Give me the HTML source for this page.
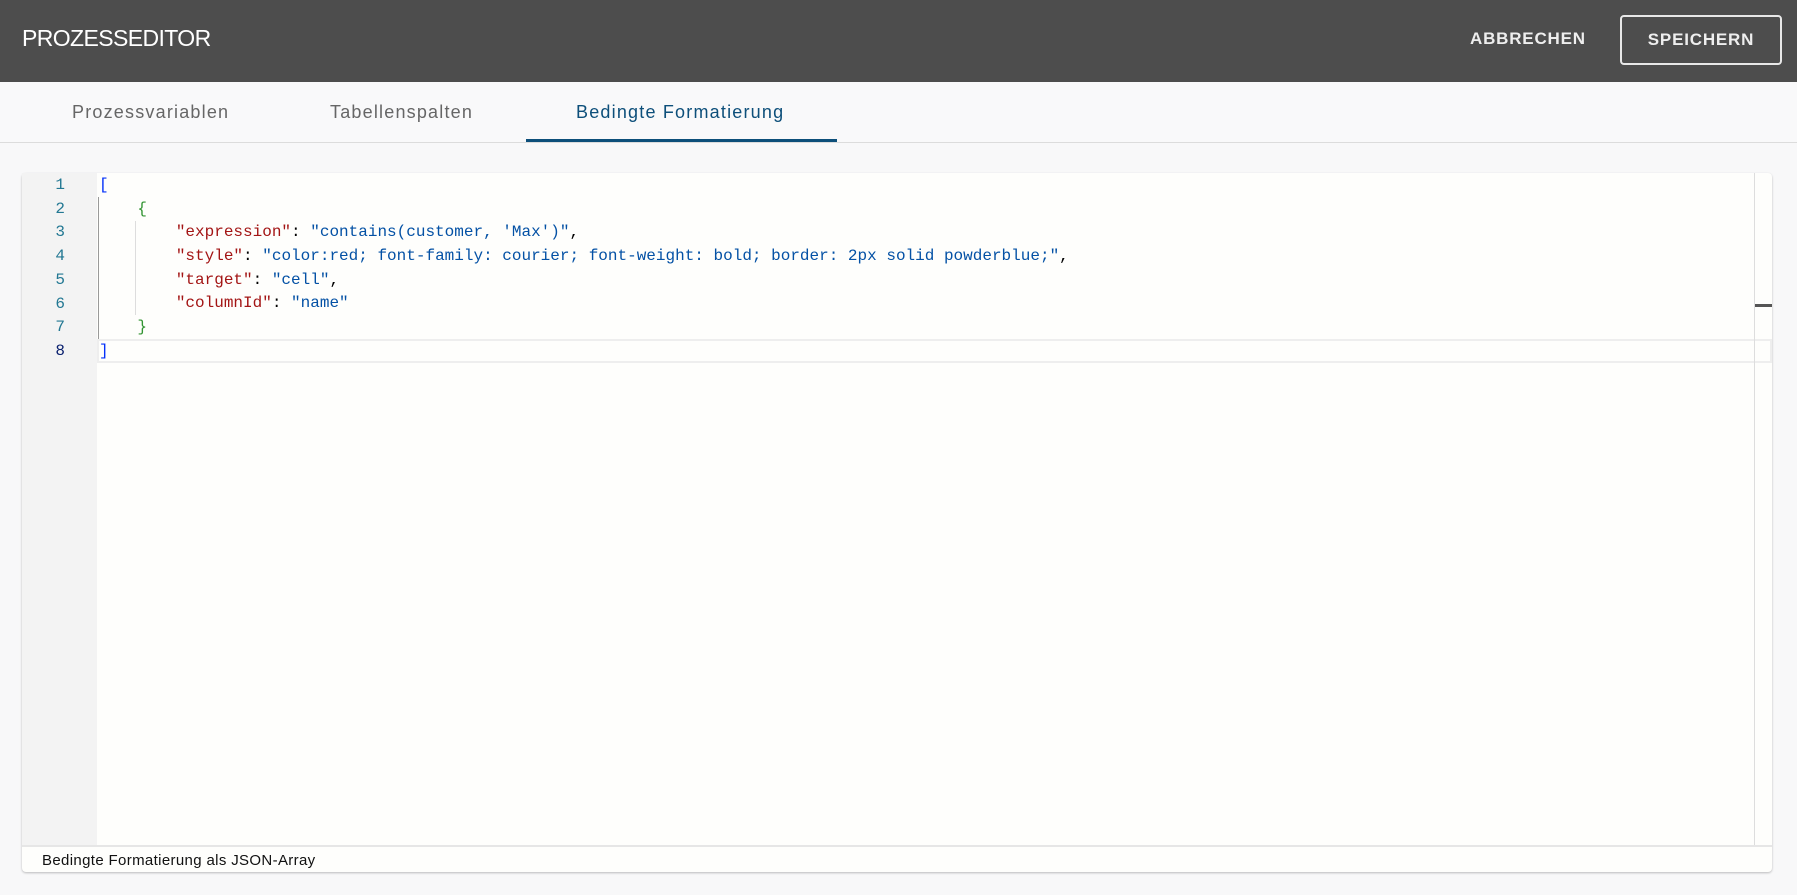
<!DOCTYPE html>
<html><head><meta charset="utf-8"><style>
*{margin:0;padding:0;box-sizing:border-box}
body{width:1797px;height:895px;background:#f8f8f9;font-family:"Liberation Sans",sans-serif;position:relative;overflow:hidden}
.hdr{position:absolute;left:0;top:0;width:1797px;height:82px;background:#4d4d4d}
.title{position:absolute;left:22px;top:25px;color:#fff;font-size:23px;letter-spacing:-0.6px}
.abb{position:absolute;left:1470px;top:29px;color:#eee;font-weight:bold;font-size:17px;letter-spacing:0.8px}
.sp{position:absolute;left:1620px;top:15px;width:162px;height:50px;border:2px solid #e8e8e8;border-radius:4px;color:#eee;font-weight:bold;font-size:17px;letter-spacing:0.8px;text-align:center;line-height:46px}
.tabs{position:absolute;left:0;top:82px;width:1797px;height:61px;background:#f9f9fa;border-bottom:1px solid #dcdcdc}
.tab{position:absolute;top:20px;font-size:18px;color:#666;letter-spacing:1.2px}
.ul{position:absolute;left:526px;top:57px;width:311px;height:3px;background:#0d4f7a}
.ed{position:absolute;left:22px;top:173px;width:1750px;height:699px;background:#fefefc;border-radius:4px;box-shadow:0 1px 2px rgba(0,0,0,.25)}
.gut{position:absolute;left:0;top:0;width:75px;height:672px;background:#f3f3f3}
.ln{position:absolute;left:0;width:43px;text-align:right;font-family:"Liberation Mono",monospace;font-size:16px;color:#237893}
.code{position:absolute;left:77px;font-family:"Liberation Mono",monospace;font-size:16px;white-space:pre;color:#000}
.k{color:#a31515}.s{color:#0451a5}
.foot{position:absolute;left:0;top:672px;width:1750px;height:27px;border-top:2px solid #e6e6e6;font-size:15px;color:#111;padding:5px 0 0 20px;letter-spacing:0.35px}
</style></head><body>
<div class="hdr"><div class="title">PROZESSEDITOR</div><div class="abb">ABBRECHEN</div><div class="sp">SPEICHERN</div></div>
<div class="tabs">
<div class="tab" style="left:72px">Prozessvariablen</div>
<div class="tab" style="left:330px">Tabellenspalten</div>
<div class="tab" style="left:576px;color:#0d4f7a">Bedingte Formatierung</div>
<div class="ul"></div></div>
<div class="ed">
<div class="gut"></div>
<div style="position:absolute;left:75px;top:166px;width:1675px;height:24px;border:2px solid #eee"></div>
<div style="position:absolute;left:76px;top:24px;width:1px;height:142px;background:#999"></div>
<div style="position:absolute;left:113px;top:48px;width:1px;height:94px;background:#ddd"></div>
<div style="position:absolute;left:1732px;top:0;width:1px;height:672px;background:#ddd"></div>
<div style="position:absolute;left:1733px;top:131px;width:17px;height:3px;background:#555"></div>
<div class="ln" style="top:3px">1</div><div class="ln" style="top:27px">2</div><div class="ln" style="top:50px">3</div><div class="ln" style="top:74px">4</div><div class="ln" style="top:98px">5</div><div class="ln" style="top:122px">6</div><div class="ln" style="top:145px">7</div><div class="ln" style="top:169px;color:#0b216f">8</div>
<div class="code" style="top:3px;color:#0431fa">[</div>
<div class="code" style="top:27px;color:#319331">    {</div>
<div class="code" style="top:50px">        <span class="k">"expression"</span>: <span class="s">"contains(customer, 'Max')"</span>,</div>
<div class="code" style="top:74px">        <span class="k">"style"</span>: <span class="s">"color:red; font-family: courier; font-weight: bold; border: 2px solid powderblue;"</span>,</div>
<div class="code" style="top:98px">        <span class="k">"target"</span>: <span class="s">"cell"</span>,</div>
<div class="code" style="top:121px">        <span class="k">"columnId"</span>: <span class="s">"name"</span></div>
<div class="code" style="top:145px;color:#319331">    }</div>
<div class="code" style="top:169px;color:#0431fa">]</div>
<div class="foot">Bedingte Formatierung als JSON-Array</div>
</div>
</body></html>
